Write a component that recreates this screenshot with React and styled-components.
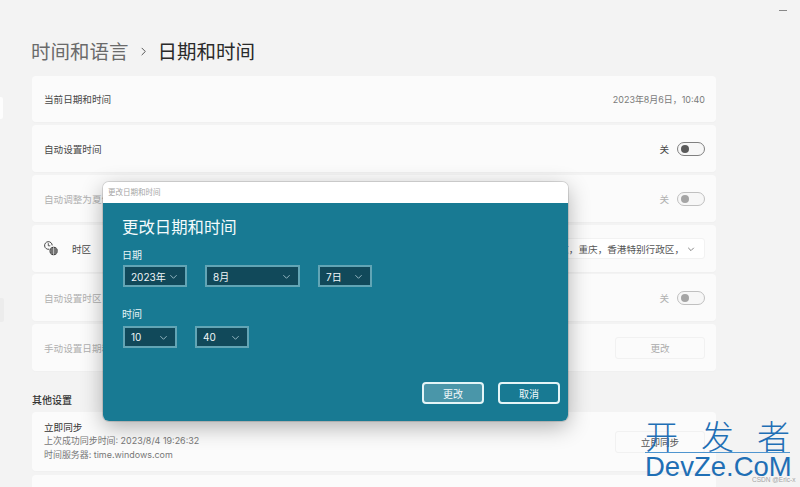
import React from "react";
import styled, { createGlobalStyle } from "styled-components";

const Global = createGlobalStyle`
  html, body { margin: 0; padding: 0; width: 800px; height: 487px; overflow: hidden; background: #f3f3f3; }
  * { box-sizing: border-box; }
  body { font-family: "Noto Sans CJK SC", "Liberation Sans", sans-serif; }
`;
const LATIN = `"Inter", "Noto Sans CJK SC", sans-serif`;

const Page = styled.div`
  position: relative; width: 800px; height: 487px; overflow: hidden; background: #f3f3f3; display: flex;
`;
const Sidebar = styled.nav`
  width: 32px; flex: none; padding-top: 97px; display: flex; flex-direction: column;
`;
const NavMark = styled.div`
  width: ${p => p.$w}px; height: ${p => p.$h}px; margin-bottom: ${p => p.$gap || 0}px;
  background: ${p => p.$c}; border-radius: 0 2px 2px 0;
`;
const Main = styled.main`
  width: 684px; flex: none; display: flex; flex-direction: column;
`;
const TitleBar = styled.div`
  height: 76px; padding-top: 36px; margin-left: -1px; display: flex; align-items: flex-start; flex: none;
`;
const Crumb = styled.span`
  font-size: 19.5px; line-height: 30px; color: ${p => p.$on ? "#2a2a2a" : "#6a6a6a"};
`;
const Sep = styled.span`
  display: flex; width: 29px; height: 30px; align-items: center; justify-content: center;
  svg { display: block; }
`;
const Card = styled.section`
  height: ${p => p.$h || 47}px; margin-bottom: ${p => p.$mb ?? 3}px; background: #fbfbfb;
  border-radius: 4px; padding: 0 11px 0 12px; display: flex; align-items: center; justify-content: space-between;
  flex: none; box-shadow: 0 1px 0 #f0f0f0;
`;
const Label = styled.span`
  font-size: 9.6px; line-height: 14px; color: ${p => p.$dim ? "#b0b0b0" : "#474747"}; white-space: nowrap;
`;
const Value = styled.span`
  font-size: 8.95px; color: #7a7a7a; font-family: ${LATIN}; white-space: nowrap;
`;
const Right = styled.div`
  display: flex; align-items: center; gap: 8px;
`;
const SwitchBox = styled.span`
  width: 28px; height: 14px; border-radius: 7px; border: 1px solid ${p => p.$dim ? "#c0c0c0" : "#808080"};
  background: #f7f7f7; display: flex; align-items: center; padding-left: 3px;
`;
const Knob = styled.span`
  width: 8px; height: 8px; border-radius: 50%; background: ${p => p.$dim ? "#a5a5a5" : "#5a5a5a"};
`;
const ZoneLeft = styled.div`
  display: flex; align-items: center; gap: 12px;
`;
const ZoneSelect = styled.div`
  width: 246px; height: 21px; background: #fff; border-radius: 3px; border: 1px solid #f2f2f2;
  display: flex; align-items: center; justify-content: flex-end; gap: 3px; padding-right: 9px;
  font-size: 9.6px; color: #555; white-space: nowrap;
`;
const GhostButton = styled.button`
  width: 90px; height: 22px; background: #fbfbfb; border: 1px solid #f1f1f1; border-radius: 3px;
  font: inherit; font-size: 9.6px; color: ${p => p.$dark ? "#555" : "#ababab"}; padding: 0;
`;
const SectionTitle = styled.h2`
  margin: 21px 0 0; height: 20px; font-size: 10px; line-height: 15px; font-weight: 500; color: #333; flex: none;
`;
const Stack = styled.div`
  display: flex; flex-direction: column;
`;
const SyncTitle = styled.span`
  font-size: 9.6px; line-height: 13px; color: #333;
`;
const SyncLine = styled.span`
  font-size: 8.95px; line-height: 14px; color: #777; white-space: nowrap; font-family: ${LATIN};
`;
const Dialog = styled.div`
  position: absolute; left: 103px; top: 182px; width: 465px; height: 239px; border-radius: 6px; overflow: hidden;
  box-shadow: 0 6px 22px rgba(0,0,0,.3), 0 0 0 1px rgba(0,0,0,.12);
  display: flex; flex-direction: column;
`;
const DialogBar = styled.div`
  height: 21px; background: #fff; padding-left: 5px; font-size: 7.5px; line-height: 20px; color: #a5a5a5; flex: none;
`;
const DialogBody = styled.div`
  flex: 1; background: #187a93; color: #fff; padding: 11px 8px 17px 19px; display: flex; flex-direction: column;
`;
const DialogTitle = styled.h1`
  margin: 0; font-size: 16.4px; line-height: 24px; font-weight: 400; color: #f4fbfc;
`;
const FieldLabel = styled.div`
  font-size: 10px; line-height: 14px; margin-top: ${p => p.$mt}px; margin-bottom: ${p => p.$mb}px; color: #e8f4f6;
`;
const FieldRow = styled.div`
  display: flex; gap: ${p => p.$gap}px; padding-left: 1px;
`;
const Picker = styled.div`
  width: ${p => p.$w}px; height: 22px; background: #11495a; border: 2px solid #62a5b5;
  display: flex; align-items: center; justify-content: space-between; padding: 0 7px 0 6px;
  font-family: ${LATIN}; font-size: 10px; color: #f0f6f8;
  svg { display: block; flex: none; }
`;
const Actions = styled.div`
  margin-top: auto; display: flex; justify-content: flex-end; gap: 14px;
`;
const ActionButton = styled.button`
  width: 62px; height: 22px; border: 2px solid #e4f5f7; border-radius: 4px; padding: 0;
  background: ${p => p.$primary ? "#4a96a9" : "#187a93"}; color: #f2f9fa; font: inherit; font-size: 10px;
`;
const Minimize = styled.span`
  position: absolute; left: 779px; top: 10px; width: 8px; height: 1px; background: #888;
`;
const Watermark = styled.div`
  position: absolute; left: 645px; top: 418px; width: 145px; pointer-events: none; color: #1f6fb5;
  display: flex; flex-direction: column;
`;
const WmTop = styled.div`
  height: 35px; display: flex; justify-content: space-between;
  font-size: 33px; line-height: 35px; border-bottom: 1px solid #4f95cf; white-space: nowrap;
  font-family: "Noto Sans CJK SC", sans-serif; font-weight: 300;
`;
const WmBottom = styled.div`
  font-family: "Liberation Sans", sans-serif; font-size: 27.5px; line-height: 28px; white-space: nowrap;
`;
const Credit = styled.span`
  position: absolute; left: 752px; top: 476px; font-family: "Liberation Sans", sans-serif; font-size: 6.5px; line-height: 8px;
  color: #a5a5a5; white-space: nowrap;
`;

const Chevron = ({ c = "#9fc0ca", s = 9 }) => (
  <svg width={s} height={s} viewBox="0 0 10 10" fill="none">
    <path d="M1.5 3.5 5 7l3.5-3.5" stroke={c} strokeWidth="1" />
  </svg>
);
const ZoneIcon = () => (
  <svg width="16" height="16" viewBox="1 1 16 16" fill="none">
    <path d="M6.2 9.2A3.8 3.8 0 1 1 9.2 5.4" stroke="#444" strokeWidth="1" />
    <path d="M5.3 3.2v2.6h2" stroke="#444" strokeWidth=".9" />
    <circle cx="10.6" cy="11" r="4.2" fill="#3a3a3a" />
    <path d="M6.6 11h8M10.6 7v8M7.4 9h6.4M7.4 13h6.4" stroke="#fbfbfb" strokeWidth=".6" />
  </svg>
);
const Toggle = ({ dim }) => (
  <Right>
    <Label $dim={dim}>关</Label>
    <SwitchBox $dim={dim}><Knob $dim={dim} /></SwitchBox>
  </Right>
);

export default function App() {
  return (
    <Page>
      <Global />
      <Sidebar>
        <NavMark $w={3} $h={22} $c="#fdfdfd" $gap={179} />
        <NavMark $w={4} $h={24} $c="#ececec" />
      </Sidebar>
      <Main>
        <TitleBar>
          <Crumb>时间和语言</Crumb>
          <Sep>
            <svg width="9" height="9" viewBox="0 0 10 10" fill="none"><path d="M3 1l4 4-4 4" stroke="#555" strokeWidth="1.1" /></svg>
          </Sep>
          <Crumb $on>日期和时间</Crumb>
        </TitleBar>
        <Card $h={46}>
          <Label>当前日期和时间</Label>
          <Value>2023年8月6日，10:40</Value>
        </Card>
        <Card $h={47}>
          <Label>自动设置时间</Label>
          <Toggle />
        </Card>
        <Card $h={47}>
          <Label $dim>自动调整为夏令时</Label>
          <Toggle dim />
        </Card>
        <Card $h={47} $mb={2}>
          <ZoneLeft><ZoneIcon /><Label>时区</Label></ZoneLeft>
          <ZoneSelect>（UTC+08:00）北京，重庆，香港特别行政区，<Chevron c="#666" s={8} /></ZoneSelect>
        </Card>
        <Card $h={47}>
          <Label $dim>自动设置时区</Label>
          <Toggle dim />
        </Card>
        <Card $h={47} $mb={0}>
          <Label $dim>手动设置日期和时间</Label>
          <GhostButton>更改</GhostButton>
        </Card>
        <SectionTitle>其他设置</SectionTitle>
        <Card $h={59} $mb={4}>
          <Stack>
            <SyncTitle>立即同步</SyncTitle>
            <SyncLine>上次成功同步时间: 2023/8/4 19:26:32</SyncLine>
            <SyncLine>时间服务器: time.windows.com</SyncLine>
          </Stack>
          <GhostButton $dark>立即同步</GhostButton>
        </Card>
        <Card $h={40} $mb={0} />
      </Main>
      <Minimize />
      <Dialog>
        <DialogBar>更改日期和时间</DialogBar>
        <DialogBody>
          <DialogTitle>更改日期和时间</DialogTitle>
          <FieldLabel $mt={10} $mb={3}>日期</FieldLabel>
          <FieldRow $gap={18}>
            <Picker $w={64}>2023年<Chevron /></Picker>
            <Picker $w={95}>8月<Chevron /></Picker>
            <Picker $w={54}>7日<Chevron /></Picker>
          </FieldRow>
          <FieldLabel $mt={20} $mb={5}>时间</FieldLabel>
          <FieldRow $gap={18}>
            <Picker $w={54}>10<Chevron /></Picker>
            <Picker $w={54}>40<Chevron /></Picker>
          </FieldRow>
          <Actions>
            <ActionButton $primary>更改</ActionButton>
            <ActionButton>取消</ActionButton>
          </Actions>
        </DialogBody>
      </Dialog>
      <Watermark>
        <WmTop><span>开</span><span>发</span><span>者</span></WmTop>
        <WmBottom>DevZe.CoM</WmBottom>
      </Watermark>
      <Credit>CSDN @Eric-x</Credit>
    </Page>
  );
}
